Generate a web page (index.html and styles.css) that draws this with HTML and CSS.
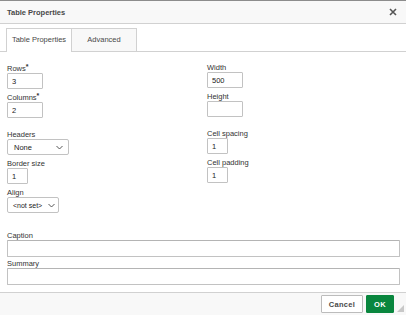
FILE: index.html
```html
<!DOCTYPE html>
<html lang="en">
<head>
    <meta charset="UTF-8">
    <title>Table Properties</title>
    <link rel="stylesheet" href="styles.css">
</head>
<body>

<div class="dialog">
    <div class="title-bar">
        <span class="title">Table Properties</span>
        <svg class="close" width="8" height="8" viewBox="0 0 8 8">
            <path d="M1 1 L7 7 M7 1 L1 7" stroke="#555" stroke-width="1.6" fill="none"/>
        </svg>
    </div>

    <div class="tabs">
        <div class="tab active">Table Properties</div>
        <div class="tab">Advanced</div>
    </div>

    <div class="content">
        <div class="columns">
            <div class="col left">
                <div class="field">
                    <label>Rows<span class="req">*</span></label>
                    <input type="text" class="num" value="3">
                </div>
                <div class="field">
                    <label>Columns<span class="req">*</span></label>
                    <input type="text" class="num" value="2">
                </div>
                <div class="field group">
                    <label>Headers</label>
                    <div class="select headers">
                        <span>None</span>
                        <svg width="7" height="5" viewBox="0 0 7 5"><path d="M0.5 1 L3.5 4 L6.5 1" stroke="#444" stroke-width="0.9" fill="none"/></svg>
                    </div>
                </div>
                <div class="field">
                    <label>Border size</label>
                    <input type="text" class="small" value="1">
                </div>
                <div class="field">
                    <label>Align</label>
                    <div class="select align">
                        <span>&lt;not set&gt;</span>
                        <svg width="7" height="5" viewBox="0 0 7 5"><path d="M0.5 1 L3.5 4 L6.5 1" stroke="#444" stroke-width="0.9" fill="none"/></svg>
                    </div>
                </div>
            </div>
            <div class="col">
                <div class="field">
                    <label>Width</label>
                    <input type="text" class="num" value="500">
                </div>
                <div class="field">
                    <label>Height</label>
                    <input type="text" class="num" value="">
                </div>
                <div class="field group">
                    <label>Cell spacing</label>
                    <input type="text" class="small" value="1">
                </div>
                <div class="field">
                    <label>Cell padding</label>
                    <input type="text" class="small" value="1">
                </div>
            </div>
        </div>

        <div class="field wide first">
            <label>Caption</label>
            <input type="text" class="full" value="">
        </div>
        <div class="field wide">
            <label>Summary</label>
            <input type="text" class="full" value="">
        </div>
    </div>

    <div class="footer">
        <button class="btn cancel">Cancel</button>
        <button class="btn ok">OK</button>
        <svg class="grip" width="7" height="7" viewBox="0 0 7 7">
            <path d="M7 0 L7 7 L0 7 Z" fill="#c8c8c8"/>
        </svg>
    </div>
</div>

</body>
</html>
```

FILE: styles.css
```css
body {
    margin: 0;
    padding: 0;
    background-color: #fff;
    font-family: 'Liberation Sans', Arial, sans-serif;
    font-size: 7.5px;
    color: #333;
}
.dialog {
    width: 406px;
    height: 315px;
    display: flex;
    flex-direction: column;
    border-top: 1px solid #8c8c8c;
    box-sizing: border-box;
}
.title-bar {
    height: 22px;
    display: flex;
    align-items: center;
    justify-content: space-between;
    padding: 0 9px 0 7px;
    background-color: #f8f8f8;
    border-bottom: 1px solid #d1d1d1;
}
.title {
    font-weight: bold;
    color: #484848;
}
/* tabs */
.tabs {
    display: flex;
    padding: 4px 0 0 6px;
    border-bottom: 1px solid #d1d1d1;
}
.tab {
    height: 22px;
    line-height: 22px;
    text-align: center;
    color: #484848;
    background-color: #f8f8f8;
    border: 1px solid #d1d1d1;
    border-bottom: none;
    border-left: none;
    width: 64px;
}
.tab.active {
    width: 64px;
    height: 23px;
    margin-bottom: -1px;
    background-color: #fff;
    border-left: 1px solid #d1d1d1;
}
/* form */
.content {
    flex: 1;
    padding: 11px 6px 0 7px;
}
.columns {
    display: grid;
    grid-template-columns: 200px 1fr;
}
.col.left {
    padding-top: 1px;
}
.field {
    margin-bottom: 4px;
}
.field.group {
    margin-top: 12px;
}
.field label {
    display: block;
    height: 9px;
    line-height: 9px;
    color: #333;
}
.req {
    font-weight: bold;
    font-size: 7px;
    position: relative;
    top: -2px;
}
input {
    display: block;
    box-sizing: border-box;
    height: 16px;
    margin: 0;
    padding: 0 0 0 4px;
    border: 1px solid #c2c2c2;
    border-radius: 1px;
    font-family: inherit;
    font-size: 7.5px;
    color: #222;
    outline: none;
}
input.num {
    width: 36px;
}
input.small {
    width: 21px;
}
input.full {
    width: 100%;
    height: 17px;
    border-top-color: #b4b4b4;
}
.select {
    box-sizing: border-box;
    height: 16px;
    display: flex;
    align-items: center;
    justify-content: space-between;
    border: 1px solid #c2c2c2;
    border-radius: 2px;
    background-color: #fff;
    color: #222;
}
.select.headers {
    width: 62px;
    padding: 0 5px 0 6px;
}
.select.align {
    width: 52px;
    padding: 0 3px 0 5px;
    font-size: 7px;
}
.field.wide.first {
    margin-top: 14px;
    margin-bottom: 2px;
}
/* footer */
.footer {
    height: 23px;
    display: flex;
    align-items: flex-start;
    justify-content: flex-end;
    padding: 2px 0 0 0;
    box-sizing: border-box;
    background-color: #f8f8f8;
    border-top: 1px solid #d1d1d1;
    position: relative;
}
.btn {
    height: 18px;
    margin: 0;
    padding: 0;
    font-family: inherit;
    font-size: 7.5px;
    font-weight: bold;
    border-radius: 1px;
    letter-spacing: 0.3px;
}
.btn.cancel {
    width: 42px;
    background-color: #fff;
    border: 1px solid #bcbcbc;
    color: #484848;
    margin-right: 3px;
}
.btn.ok {
    width: 28px;
    background-color: #09863e;
    border: 1px solid #09863e;
    color: #fff;
    margin-right: 12px;
}
.grip {
    position: absolute;
    right: 2px;
    bottom: 3px;
}
```
